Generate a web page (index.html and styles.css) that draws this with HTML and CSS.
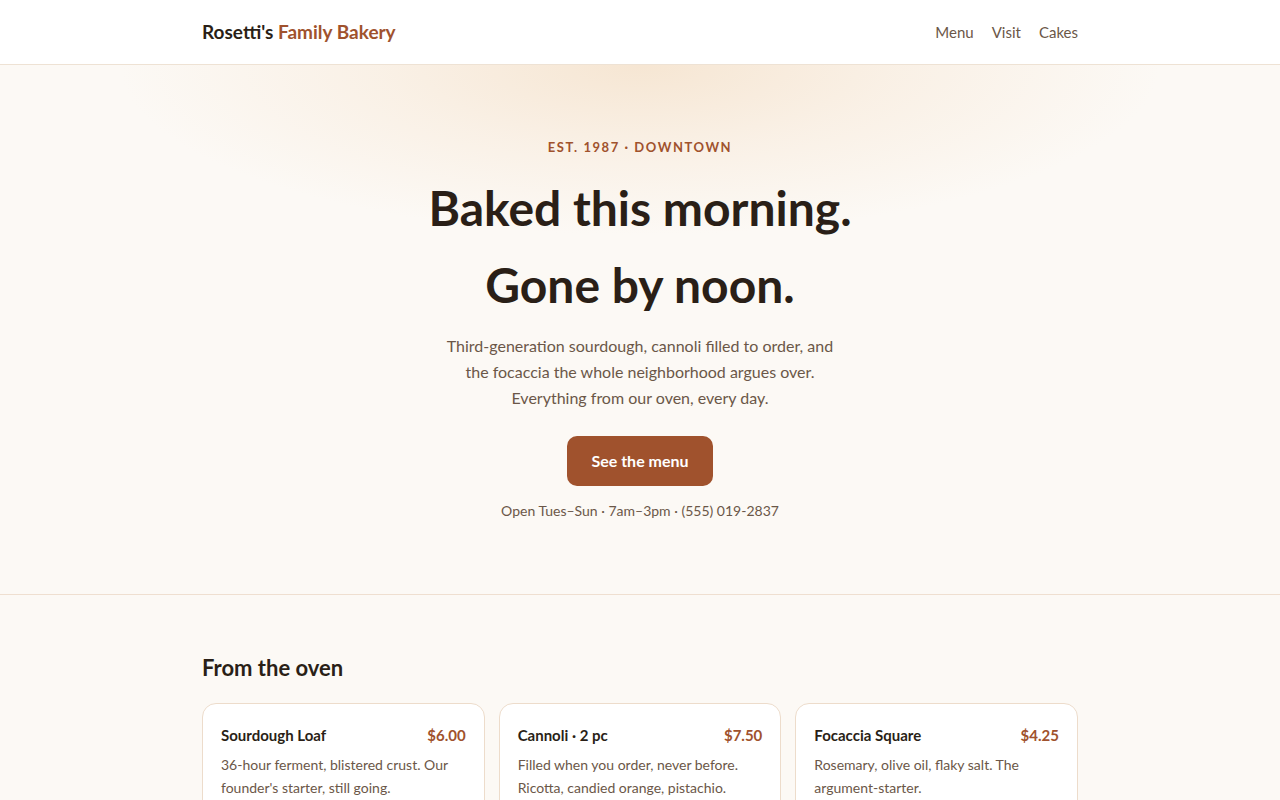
FILE: index.html
```html
<!DOCTYPE html>
<html lang="en">

<head>
  <meta name="viewport" content="width=device-width, initial-scale=1">
  <meta charset="UTF-8">
  <link rel="stylesheet" href="styles.css">
</head>

<body>
  <header class="site-header">
    <div class="wrap header-inner">
      <a class="logo" href="#">Rosetti's <span class="logo-accent">Family Bakery</span></a>
      <nav class="nav">
        <a href="#menu">Menu</a>
        <a href="#visit">Visit</a>
        <a href="#cakes">Cakes</a>
      </nav>
    </div>
  </header>

  <section class="hero">
    <div class="wrap hero-inner">
      <p class="eyebrow">Est. 1987 · Downtown</p>
      <h1 class="hero-title">Baked this morning.<br>Gone by noon.</h1>
      <p class="hero-text">Third-generation sourdough, cannoli filled to order, and the focaccia the whole neighborhood argues over. Everything from our oven, every day.</p>
      <a class="btn" href="#menu">See the menu</a>
      <p class="hours">Open Tues–Sun · 7am–3pm · (555) 019-2837</p>
    </div>
  </section>

  <section class="menu" id="menu">
    <div class="wrap">
      <h2 class="section-title">From the oven</h2>
      <div class="cards">
        <div class="card">
          <div class="card-head">
            <span class="card-name">Sourdough Loaf</span>
            <span class="card-price">$6.00</span>
          </div>
          <p class="card-text">36-hour ferment, blistered crust. Our founder's starter, still going.</p>
        </div>
        <div class="card">
          <div class="card-head">
            <span class="card-name">Cannoli · 2 pc</span>
            <span class="card-price">$7.50</span>
          </div>
          <p class="card-text">Filled when you order, never before. Ricotta, candied orange, pistachio.</p>
        </div>
        <div class="card">
          <div class="card-head">
            <span class="card-name">Focaccia Square</span>
            <span class="card-price">$4.25</span>
          </div>
          <p class="card-text">Rosemary, olive oil, flaky salt. The argument-starter.</p>
        </div>
      </div>
    </div>
  </section>
</body>

</html>
```

FILE: styles.css
```css
* {
  box-sizing: border-box;
}

body {
  margin: 0;
  font-family: "Lato", "Noto Sans", sans-serif;
  line-height: 1.6;
  color: #2a1f17;
  background-color: #fcf9f5;
}

a {
  text-decoration: none;
  color: inherit;
}

.wrap {
  width: 876px;
  margin: 0 auto;
}

/* header */

.site-header {
  background-color: #ffffff;
  border-bottom: 1px solid #eee2d4;
}

.header-inner {
  height: 64px;
  display: flex;
  align-items: center;
  justify-content: space-between;
}

.logo {
  font-size: 19px;
  font-weight: 700;
  color: #2a1f17;
}

.logo-accent {
  color: #a0522d;
}

.nav {
  display: flex;
  gap: 18px;
}

.nav a {
  font-size: 15px;
  color: #6b5748;
}

/* hero */

.hero {
  background-color: #fcf9f5;
  background-image: radial-gradient(ellipse 520px 170px at 50% 0%, #f6e6d3 0%, rgba(248, 235, 220, 0.6) 50%, rgba(252, 249, 245, 0) 100%);
  border-bottom: 1px solid #efdfd0;
}

.hero-inner {
  padding: 72px 0 72px;
  text-align: center;
  display: flex;
  flex-direction: column;
  align-items: center;
}

.eyebrow {
  margin: 0;
  font-size: 13px;
  font-weight: 700;
  letter-spacing: 0.12em;
  text-transform: uppercase;
  color: #a0522d;
}

.hero-title {
  margin: 12px 0 10px;
  font-size: 48px;
  font-weight: 700;
  line-height: 1.6;
  color: #2a1f17;
}

.hero-text {
  margin: 0 0 26px;
  max-width: 400px;
  font-size: 16px;
  color: #6b5748;
}

.btn {
  display: inline-block;
  padding: 12px 24px;
  border-radius: 10px;
  background-color: #a0522d;
  color: #ffffff;
  font-size: 16px;
  font-weight: 700;
}

.hours {
  margin: 14px 0 0;
  font-size: 14px;
  color: #6b5748;
}

/* menu */

.menu {
  padding: 55px 0 60px;
}

.section-title {
  margin: 0 0 18px;
  font-size: 22px;
  font-weight: 700;
  line-height: 1.6;
}

.cards {
  display: grid;
  grid-template-columns: repeat(3, 1fr);
  gap: 14px;
}

.card {
  background-color: #ffffff;
  border: 1px solid #eddccb;
  border-radius: 14px;
  padding: 19px 18px;
}

.card-head {
  display: flex;
  justify-content: space-between;
  align-items: baseline;
}

.card-name {
  font-size: 15px;
  font-weight: 700;
}

.card-price {
  font-size: 15px;
  font-weight: 700;
  color: #a0522d;
}

.card-text {
  margin: 7px 0 0;
  font-size: 14px;
  color: #6b5748;
}
```
